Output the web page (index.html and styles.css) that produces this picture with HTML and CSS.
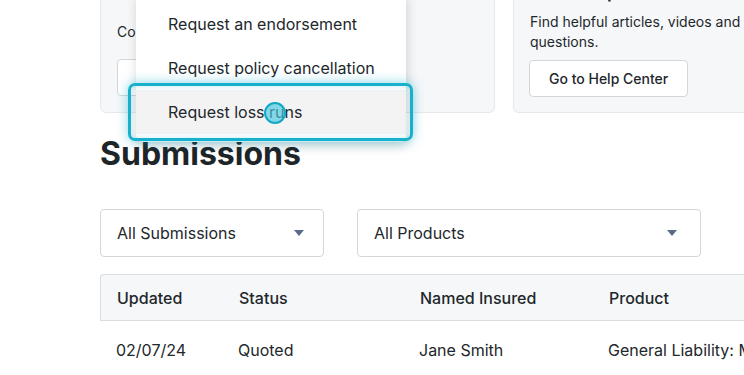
FILE: index.html
```html
<!DOCTYPE html>
<html lang="en">
<head>
    <meta charset="UTF-8">
    <meta name="viewport" content="width=device-width, initial-scale=1.0">
    <title>Policies - Broker Portal</title>
    <link rel="stylesheet" href="styles.css">
</head>
<body>

    <div class="page">
        <div class="cards">
            <div class="card card-policy">
                <h3>Manage a policy</h3>
                <p>Contact us for policy changes.</p>
                <button type="button" class="btn">Choose an action</button>
            </div>
            <div class="card card-help">
                <h3>Need help?</h3>
                <p>Find helpful articles, videos and more to answer your questions.</p>
                <button type="button" class="btn">Go to Help Center</button>
            </div>
        </div>

        <ul class="action-menu">
            <li class="menu-item">Request an endorsement</li>
            <li class="menu-item">Request policy cancellation</li>
            <li class="menu-item is-active">Request loss runs<span class="cursor"></span></li>
        </ul>

        <h2 class="section-title">Submissions</h2>

        <div class="filters">
            <div class="select select-status">All Submissions <span class="caret"></span></div>
            <div class="select select-product">All Products <span class="caret"></span></div>
        </div>

        <div class="table">
            <div class="table-row table-head">
                <div>Updated</div>
                <div>Status</div>
                <div>Named Insured</div>
                <div>Product</div>
            </div>
            <div class="table-row">
                <div>02/07/24</div>
                <div>Quoted</div>
                <div>Jane Smith</div>
                <div>General Liability: Main Street Bakery</div>
            </div>
        </div>
    </div>

</body>
</html>
```

FILE: styles.css
```css
body {
    font-family: Inter, "Noto Sans", Arial, sans-serif;
    background-color: white;
    color: #22272b;
    margin: 0;
    overflow: hidden;
}
/* page is scrolled: the top of the cards sits above the window */
.page {
    position: relative;
    width: 1000px;
    padding-left: 100px;
    margin-top: -37px;
}
.cards {
    display: grid;
    grid-template-columns: 395px 1fr;
    gap: 18px;
}
.card {
    background: #f6f7f9;
    border: 1px solid #e6e8ec;
    border-radius: 6px;
    padding: 16px 16px 15px;
    font-size: 14px;
    line-height: 20px;
}
.card h3 {
    margin: 0 0 8px;
    font-size: 18px;
    line-height: 24px;
    font-weight: 600;
}
.card p {
    margin: 0 0 8px;
    width: 360px;
}
.card-policy h3 {
    margin-bottom: 18px;
}
.card-policy p {
    margin-bottom: 17px;
    white-space: nowrap;
}
.btn {
    font-family: inherit;
    font-size: 14px;
    font-weight: 500;
    color: #22272b;
    background: white;
    border: 1px solid #d3d6db;
    border-radius: 4px;
    padding: 0 19px;
    height: 37px;
    cursor: pointer;
}
.card-help .btn {
    margin-left: -1px;
}
.action-menu {
    position: absolute;
    left: 136px;
    top: 31px;
    width: 270px;
    margin: 0;
    padding: 8px 0;
    list-style: none;
    background: white;
    border-radius: 0 0 6px 6px;
    box-shadow: 1px 4px 12px rgba(0, 0, 0, 0.16);
}
.menu-item {
    position: relative;
    padding: 0 32px;
    height: 44px;
    line-height: 44px;
    font-size: 16px;
    white-space: nowrap;
}
.menu-item.is-active {
    background: #f3f3f4;
}
.menu-item.is-active::after {
    content: "";
    position: absolute;
    left: -8px;
    right: -7px;
    top: -7px;
    bottom: -7px;
    border: 3px solid #17b1cd;
    border-radius: 7px;
    box-shadow: 0 0 12px rgba(23, 177, 205, 0.5), inset 0 0 6px rgba(23, 177, 205, 0.25);
}
.cursor {
    position: absolute;
    left: 128px;
    top: 12px;
    width: 18px;
    height: 18px;
    border: 2px solid #12a8c4;
    border-radius: 50%;
    background: rgba(70, 200, 225, 0.65);
}
.section-title {
    margin: 21px 0 0;
    font-size: 32px;
    line-height: 40px;
    font-weight: 700;
    color: #1e2529;
}
.filters {
    display: flex;
    gap: 33px;
    margin-top: 35px;
}
.select {
    display: flex;
    align-items: center;
    justify-content: space-between;
    height: 46px;
    padding: 0 19px 0 16px;
    border: 1px solid #d3d6db;
    border-radius: 4px;
    font-size: 16px;
}
.select-status {
    width: 187px;
}
.select-product {
    width: 303px;
    padding-right: 23px;
}
.caret {
    width: 0;
    height: 0;
    border-left: 5px solid transparent;
    border-right: 5px solid transparent;
    border-top: 6px solid #5b6b8c;
}
.table {
    margin-top: 17px;
}
.table-row {
    display: grid;
    grid-template-columns: 122px 181px 189px 1fr;
    align-items: center;
    padding-left: 16px;
    height: 58px;
    font-size: 16px;
    white-space: nowrap;
}
.table-head {
    height: 45px;
    background: #f6f7f9;
    border: 1px solid #d9dce0;
    border-right: none;
    border-radius: 4px 0 0 0;
    font-weight: 500;
}
```
